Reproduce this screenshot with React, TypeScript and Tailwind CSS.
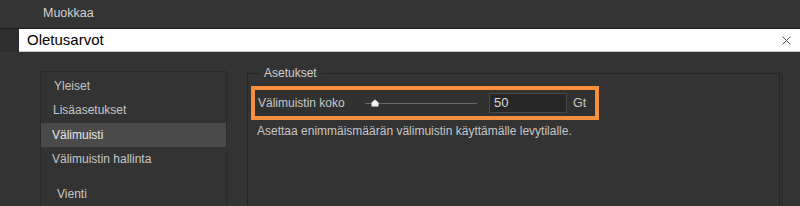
export default function App() {
  const items = [
    { label: "Yleiset", cls: "h-[25px] pl-[13px] pt-[3px]" },
    { label: "Lisäasetukset", cls: "h-[26px] pl-[12px]" },
    { label: "Välimuisti", cls: "h-[24px] pl-[11px] bg-[#4a4a4a] text-[#e6e6e6]" },
    { label: "Välimuistin hallinta", cls: "h-[24px] pl-[11px]" },
    { label: "Vienti", cls: "h-[38px] pl-[16px] pt-[8px]" },
  ];

  return (
    <div
      className="w-[800px] h-[206px] bg-[#333333] overflow-hidden flex flex-col"
      style={{ fontFamily: "'Liberation Sans', Arial, sans-serif" }}
    >
      {/* app menu bar */}
      <div className="h-[29px] shrink-0 flex items-center pl-[43px] pb-[1px] text-[12.5px] text-[#d2d2d2] bg-[#343434] border-b border-[#1d1d1d]">
        Muokkaa
      </div>

      {/* dialog title */}
      <div className="flex shrink-0 pl-[19px] bg-[#2e2e2e]">
        <div className="flex-1 h-[23px] bg-white border-b border-[#c8c8c8] flex items-center justify-between pl-[8px] pr-[8px] text-[15px] text-black">
          <span>Oletusarvot</span>
          <svg width="9" height="9" viewBox="0 0 9 9" className="mr-[1px]">
            <path d="M0.5 0.5 L8.5 8.5 M8.5 0.5 L0.5 8.5" stroke="#444" strokeWidth="0.9" />
          </svg>
        </div>
      </div>

      {/* body */}
      <div className="flex flex-1 pt-[19px] pl-[40px]">
        <div className="w-[187px] border-l border-t border-r border-[#2a2a2a] flex flex-col text-[12px] text-[#c6c6c6]">
          {items.map((it) => (
            <div key={it.label} className={`flex items-center ${it.cls}`}>
              {it.label}
            </div>
          ))}
        </div>

        <fieldset className="ml-[20px] w-[533px] border border-[#252525] border-b-0 px-[3px] pt-[4px] -mt-[7px]">
          <legend className="ml-[9px] px-[4px] text-[12px] text-[#d0d0d0]">Asetukset</legend>
          <div className="w-[348px] h-[34px] border-4 border-[#f5903f] bg-[#313131] flex items-center pl-[3px] text-[12px] text-[#c8c8c8]">
            <span className="w-[107px]">Välimuistin koko</span>
            <div className="relative w-[112px] h-[10px] flex items-center">
              <div className="w-full h-px bg-[#6a6a6a]" />
              <svg width="8" height="8" viewBox="0 0 8 8" className="absolute left-[6px] top-[1px]">
                <path d="M4 0.5 L7.5 3.5 L7.5 7.5 L0.5 7.5 L0.5 3.5 Z" fill="#f2f2f2" />
              </svg>
            </div>
            <div className="ml-[12px] w-[78px] h-[20px] bg-[#272727] border border-[#484848] flex items-center pl-[4px] text-[13px] text-[#dadada]">
              50
            </div>
            <span className="ml-[6px] text-[12.5px]">Gt</span>
          </div>
          <div className="pl-[6px] mt-[2px] text-[12px] text-[#c6c6c6]">
            Asettaa enimmäismäärän välimuistin käyttämälle levytilalle.
          </div>
        </fieldset>
        <div className="w-[2px] ml-[1px] bg-[#2c2c2c]" />
      </div>

      {/* bottom edge of the next window */}
      <div className="h-[2px] shrink-0 flex">
        <div className="w-[40px]" />
        <div className="w-[215px] bg-[#9a9a9a]" />
        <div className="flex-1" />
        <div className="w-[167px] bg-[#9a9a9a]" />
      </div>
    </div>
  );
}
